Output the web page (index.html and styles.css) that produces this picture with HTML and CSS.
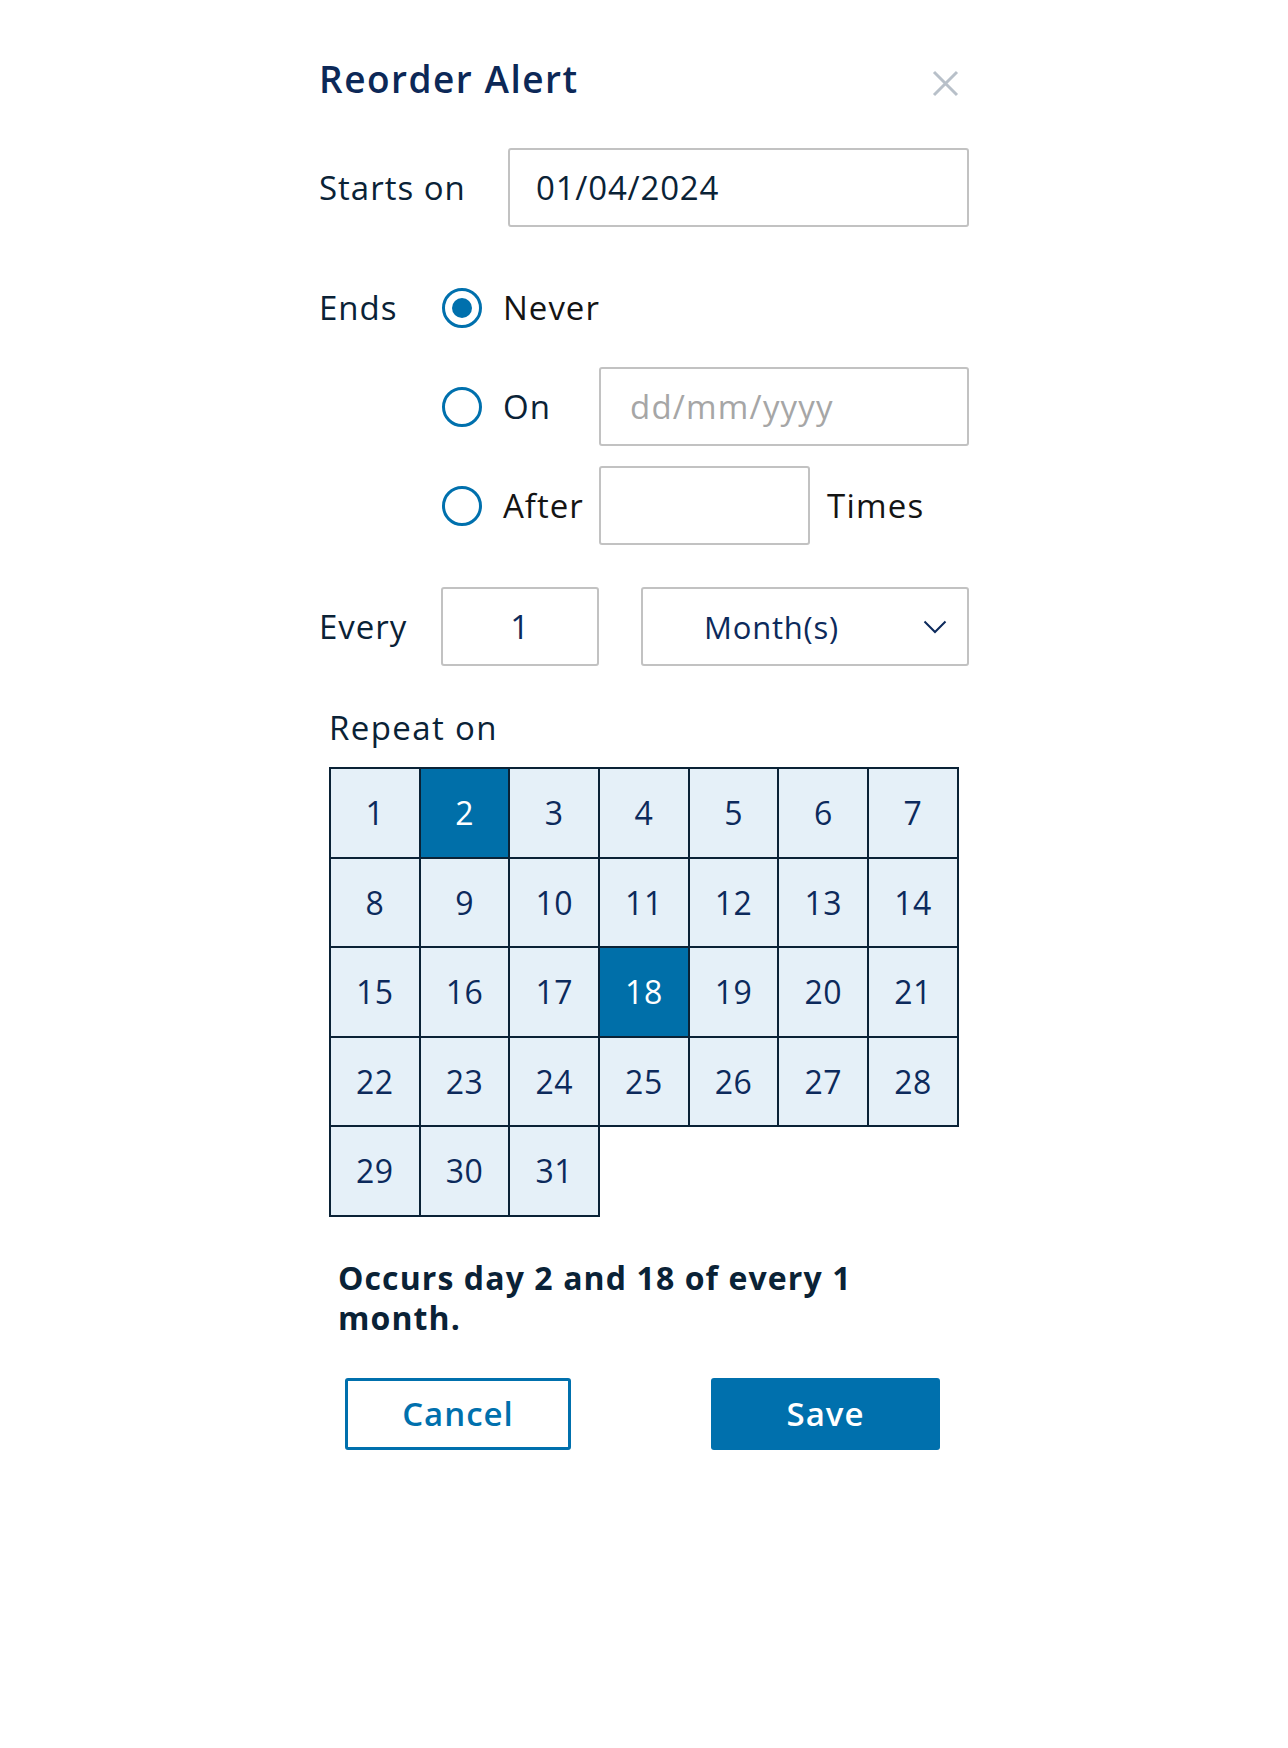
FILE: index.html
```html
<!DOCTYPE html>
<html lang="en">
<head>
<meta charset="utf-8">
<title>Reorder Alert</title>
<link rel="stylesheet" href="styles.css">
</head>
<body>
<div class="dialog">
  <div class="header">
    <h1 class="title">Reorder Alert</h1>
    <svg class="close" width="27" height="27" viewBox="0 0 27 27" aria-label="Close">
      <path d="M2 2 L25 25 M25 2 L2 25" stroke="#b8c0c9" stroke-width="3" fill="none"/>
    </svg>
  </div>

  <div class="row starts">
    <span class="label starts-label">Starts on</span>
    <input class="field starts-field" type="text" value="01/04/2024">
  </div>

  <div class="ends">
    <div class="row">
      <span class="label ends-label">Ends</span>
      <span class="radio checked"></span>
      <span class="radio-text black">Never</span>
    </div>
    <div class="row">
      <span class="label ends-label"></span>
      <span class="radio"></span>
      <span class="radio-text">On</span>
      <input class="field on-field" type="text" placeholder="dd/mm/yyyy">
    </div>
    <div class="row">
      <span class="label ends-label"></span>
      <span class="radio"></span>
      <span class="radio-text black">After</span>
      <input class="field after-field" type="text">
      <span class="times">Times</span>
    </div>
  </div>

  <div class="row every">
    <span class="label every-label">Every</span>
    <input class="field num-field" type="text" value="1">
    <div class="field select">
      <span class="select-text">Month(s)</span>
      <svg class="chevron" width="24" height="14" viewBox="0 0 24 14">
        <path d="M1.5 1.5 L12 12 L22.5 1.5" stroke="#0c2a5c" stroke-width="2" fill="none"/>
      </svg>
    </div>
  </div>

  <div class="repeat-label">Repeat on</div>
  <div class="days">
    <div class="day">1</div><div class="day selected">2</div><div class="day">3</div><div class="day">4</div><div class="day">5</div><div class="day">6</div><div class="day">7</div>
    <div class="day">8</div><div class="day">9</div><div class="day">10</div><div class="day">11</div><div class="day">12</div><div class="day">13</div><div class="day">14</div>
    <div class="day">15</div><div class="day">16</div><div class="day">17</div><div class="day selected">18</div><div class="day">19</div><div class="day">20</div><div class="day">21</div>
    <div class="day">22</div><div class="day">23</div><div class="day">24</div><div class="day">25</div><div class="day">26</div><div class="day">27</div><div class="day">28</div>
    <div class="day">29</div><div class="day">30</div><div class="day">31</div>
  </div>

  <p class="summary">Occurs day 2 and 18 of every 1 month.</p>

  <div class="buttons">
    <button class="btn cancel">Cancel</button>
    <button class="btn save">Save</button>
  </div>
</div>
</body>
</html>
```
FILE: styles.css
```css
html, body {
  margin: 0;
  padding: 0;
  background: #ffffff;
}

body {
  font-family: "Open Sans", "Noto Sans", "DejaVu Sans", sans-serif;
  color: #0a2236;
}

.dialog {
  width: 650px;
  margin: 0 0 0 319px;
  padding-top: 53px;
  box-sizing: border-box;
}

.header {
  display: flex;
  justify-content: space-between;
  align-items: flex-start;
  height: 52px;
}

.title {
  margin: 0;
  font-size: 37px;
  line-height: 52px;
  font-weight: 600;
  color: #0c2857;
  letter-spacing: 1.5px;
}

.close {
  margin-top: 17px;
  margin-right: 10px;
  display: block;
}

.row {
  display: flex;
  align-items: center;
  height: 79px;
}

.label {
  font-size: 33px;
  letter-spacing: 1px;
  color: #0a2236;
  flex: none;
}

.field {
  box-sizing: border-box;
  height: 79px;
  border: 2px solid #c2c2c2;
  border-radius: 3px;
  background: #fff;
  font-family: inherit;
  font-size: 33px;
  letter-spacing: 0.8px;
  color: #0a2236;
  padding: 0 0 0 26px;
  margin: 0;
  outline: none;
}

.field::placeholder {
  color: #a6a6a6;
}

.starts {
  margin-top: 43px;
}

.starts-label {
  width: 189px;
}

.starts-field {
  flex: 1;
  min-width: 0;
}

.ends {
  margin-top: 41px;
  display: flex;
  flex-direction: column;
  gap: 20px;
}

.ends-label {
  width: 123px;
}

.radio {
  flex: none;
  box-sizing: border-box;
  width: 40px;
  height: 40px;
  border: 3px solid #0070ad;
  border-radius: 50%;
  display: flex;
  align-items: center;
  justify-content: center;
  margin-right: 21px;
}

.radio.checked::after {
  content: "";
  width: 20px;
  height: 20px;
  border-radius: 50%;
  background: #0070ad;
}

.radio-text {
  width: 96px;
  flex: none;
  font-size: 33px;
  letter-spacing: 1px;
  color: #0a2236;
}

.radio-text.black {
  color: #141414;
}

.on-field {
  flex: 1;
  min-width: 0;
  padding-left: 29px;
  letter-spacing: 1.2px;
}

.after-field {
  width: 211px;
  flex: none;
}

.times {
  margin-left: 17px;
  font-size: 33px;
  letter-spacing: 1.2px;
  color: #141414;
}

.every {
  margin-top: 42px;
}

.every-label {
  width: 122px;
}

.num-field {
  width: 158px;
  flex: none;
  padding: 0;
  text-align: center;
  color: #0c2a5c;
  font-weight: 500;
}

.select {
  flex: 1;
  margin-left: 42px;
  display: flex;
  align-items: center;
  justify-content: space-between;
  padding: 0 20px 0 61px;
}

.select-text {
  color: #0c2a5c;
  font-weight: 500;
  font-size: 31px;
  letter-spacing: 0.8px;
}

.chevron {
  display: block;
}

.repeat-label {
  margin-top: 40px;
  margin-left: 10px;
  font-size: 33px;
  line-height: 44px;
  letter-spacing: 1.4px;
  color: #0a2236;
}

.days {
  margin-top: 18px;
  margin-left: 11px;
  display: grid;
  grid-template-columns: repeat(7, 89.7px);
  grid-auto-rows: 89.5px;
}

.day {
  background: #e5f0f8;
  outline: 2px solid #0a2236;
  outline-offset: -1px;
  display: flex;
  align-items: center;
  justify-content: center;
  font-size: 32px;
  letter-spacing: 0.5px;
  color: #0c2a5c;
}

.day.selected {
  background: #006fa9;
  color: #ffffff;
}

.summary {
  margin: 42px 0 0 0;
  padding-left: 19px;
  max-width: 580px;
  font-size: 32px;
  line-height: 40px;
  font-weight: 700;
  letter-spacing: 1.1px;
  color: #0a2236;
}

.buttons {
  margin-top: 40px;
  display: flex;
  justify-content: space-between;
  padding: 0 29px 0 26px;
}

.btn {
  box-sizing: border-box;
  height: 72px;
  border-radius: 3px;
  font-family: inherit;
  font-size: 33px;
  font-weight: 600;
  letter-spacing: 1px;
  cursor: pointer;
  margin: 0;
  padding: 0;
}

.cancel {
  width: 226px;
  background: #ffffff;
  border: 3px solid #0070ad;
  color: #0070ad;
}

.save {
  width: 229px;
  background: #0070ad;
  border: none;
  color: #ffffff;
}
```
